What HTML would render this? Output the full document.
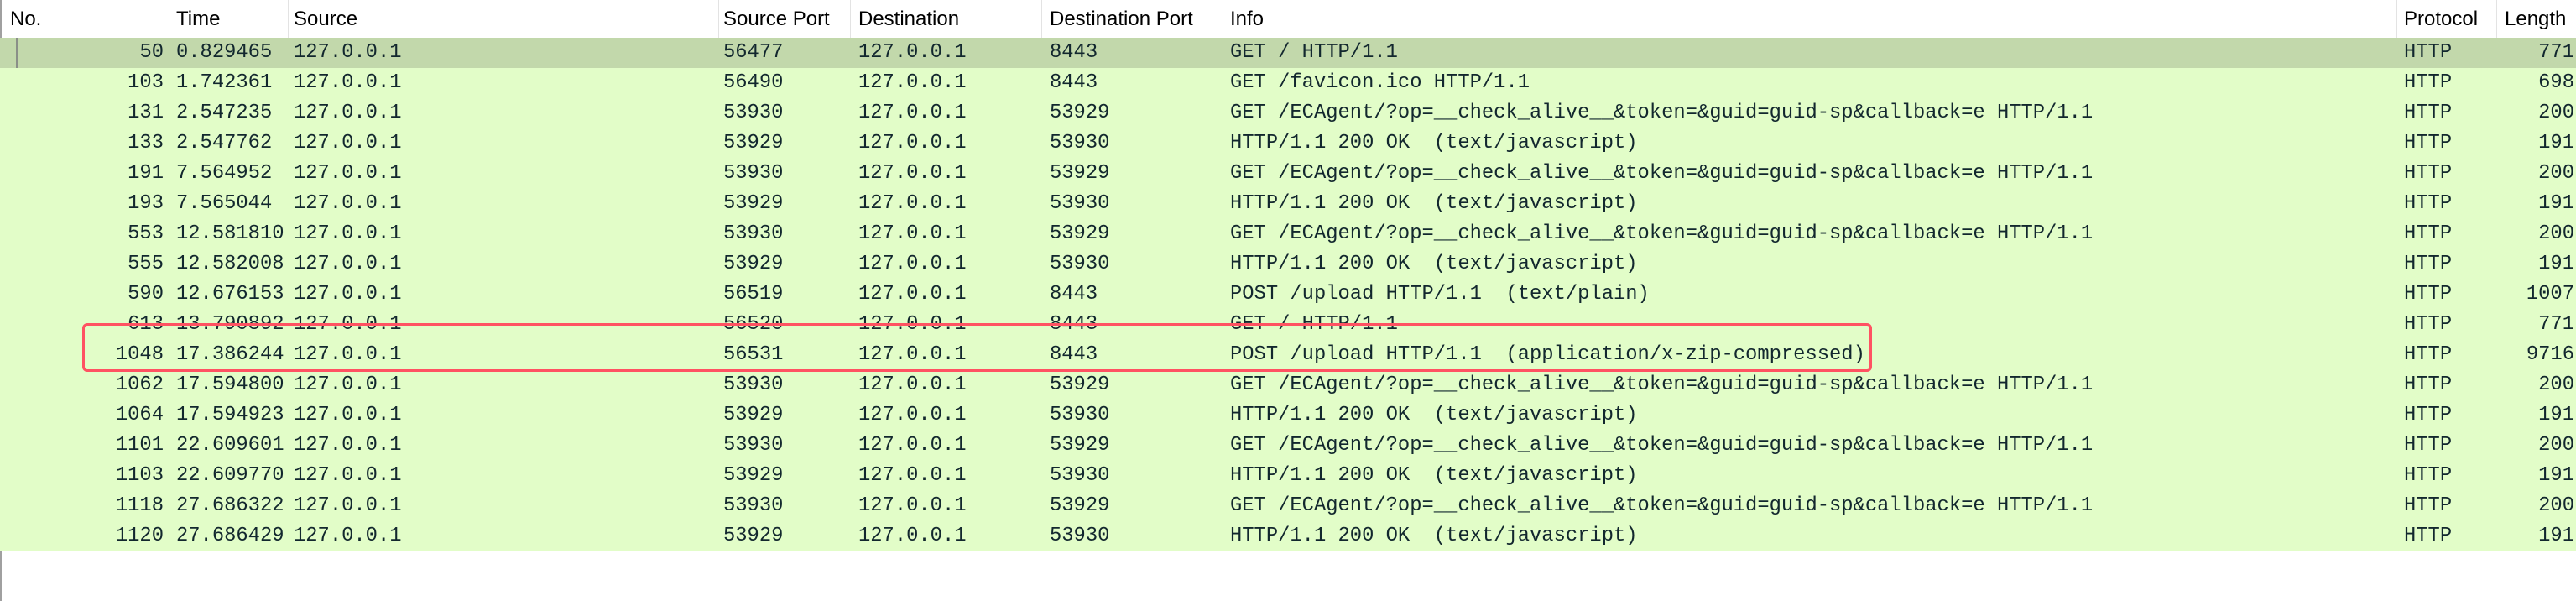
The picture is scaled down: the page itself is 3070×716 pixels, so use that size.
<!DOCTYPE html>
<html><head><meta charset="utf-8"><style>
html,body{margin:0;padding:0;background:#fff;width:3070px;height:716px;overflow:hidden;position:relative}
.h{position:absolute;top:0;height:45px;line-height:45px;font-family:"Liberation Sans",sans-serif;font-size:24px;color:#000;white-space:pre}
.d{position:absolute;top:0;width:1px;height:45px;background:#e3e3e3}
.r{position:absolute;left:0;width:3070px;height:36px;background:#e2fdc8}
.r span{position:absolute;top:0;line-height:36px;font-family:"Liberation Mono",monospace;font-size:23.8px;color:#12272e;white-space:pre}
.n{right:2875px;text-align:right}
.l{right:2px;text-align:right}
</style></head><body>
<div style="position:absolute;left:0;top:0;width:2px;height:716px;background:#a0a0a0"></div>
<div class="h" style="left:12px">No.</div><div class="d" style="left:201px"></div>
<div class="h" style="left:210px">Time</div><div class="d" style="left:343px"></div>
<div class="h" style="left:350px">Source</div><div class="d" style="left:856px"></div>
<div class="h" style="left:862px">Source Port</div><div class="d" style="left:1013px"></div>
<div class="h" style="left:1023px">Destination</div><div class="d" style="left:1241px"></div>
<div class="h" style="left:1251px">Destination Port</div><div class="d" style="left:1457px"></div>
<div class="h" style="left:1466px">Info</div><div class="d" style="left:2856px"></div>
<div class="h" style="left:2865px">Protocol</div><div class="d" style="left:2975px"></div>
<div class="h" style="left:2985px">Length</div>
<div id="rows"></div>
<script>
var R=[["50","0.829465","56477","127.0.0.1","8443","GET / HTTP/1.1","771"],
["103","1.742361","56490","127.0.0.1","8443","GET /favicon.ico HTTP/1.1","698"],
["131","2.547235","53930","127.0.0.1","53929","GET /ECAgent/?op=__check_alive__&token=&guid=guid-sp&callback=e HTTP/1.1","200"],
["133","2.547762","53929","127.0.0.1","53930","HTTP/1.1 200 OK  (text/javascript)","191"],
["191","7.564952","53930","127.0.0.1","53929","GET /ECAgent/?op=__check_alive__&token=&guid=guid-sp&callback=e HTTP/1.1","200"],
["193","7.565044","53929","127.0.0.1","53930","HTTP/1.1 200 OK  (text/javascript)","191"],
["553","12.581810","53930","127.0.0.1","53929","GET /ECAgent/?op=__check_alive__&token=&guid=guid-sp&callback=e HTTP/1.1","200"],
["555","12.582008","53929","127.0.0.1","53930","HTTP/1.1 200 OK  (text/javascript)","191"],
["590","12.676153","56519","127.0.0.1","8443","POST /upload HTTP/1.1  (text/plain)","1007"],
["613","13.790892","56520","127.0.0.1","8443","GET / HTTP/1.1","771"],
["1048","17.386244","56531","127.0.0.1","8443","POST /upload HTTP/1.1  (application/x-zip-compressed)","9716"],
["1062","17.594800","53930","127.0.0.1","53929","GET /ECAgent/?op=__check_alive__&token=&guid=guid-sp&callback=e HTTP/1.1","200"],
["1064","17.594923","53929","127.0.0.1","53930","HTTP/1.1 200 OK  (text/javascript)","191"],
["1101","22.609601","53930","127.0.0.1","53929","GET /ECAgent/?op=__check_alive__&token=&guid=guid-sp&callback=e HTTP/1.1","200"],
["1103","22.609770","53929","127.0.0.1","53930","HTTP/1.1 200 OK  (text/javascript)","191"],
["1118","27.686322","53930","127.0.0.1","53929","GET /ECAgent/?op=__check_alive__&token=&guid=guid-sp&callback=e HTTP/1.1","200"],
["1120","27.686429","53929","127.0.0.1","53930","HTTP/1.1 200 OK  (text/javascript)","191"]];
var h="";
R.forEach(function(r,i){
 h+='<div class="r" style="top:'+(45+i*36)+'px;'+(i==0?'background:#c2d8ab':'')+'">'+
 (i==0?'<div style="position:absolute;left:19px;top:0;width:2px;height:36px;background:#8a8f88"></div>':'')+
 '<span class="n">'+r[0]+'</span><span style="left:210px">'+r[1]+'</span><span style="left:350px">127.0.0.1</span>'+
 '<span style="left:862px">'+r[2]+'</span><span style="left:1023px">'+r[3]+'</span><span style="left:1251px">'+r[4]+'</span>'+
 '<span style="left:1466px">'+r[5].replace(/&/g,'&amp;')+'</span><span style="left:2865px">HTTP</span><span class="l">'+r[6]+'</span></div>';
});
document.getElementById("rows").innerHTML=h;
</script>
<div style="position:absolute;left:98px;top:385px;width:2127px;height:52px;border:3px solid #ff5262;border-radius:6px"></div>
</body></html>
